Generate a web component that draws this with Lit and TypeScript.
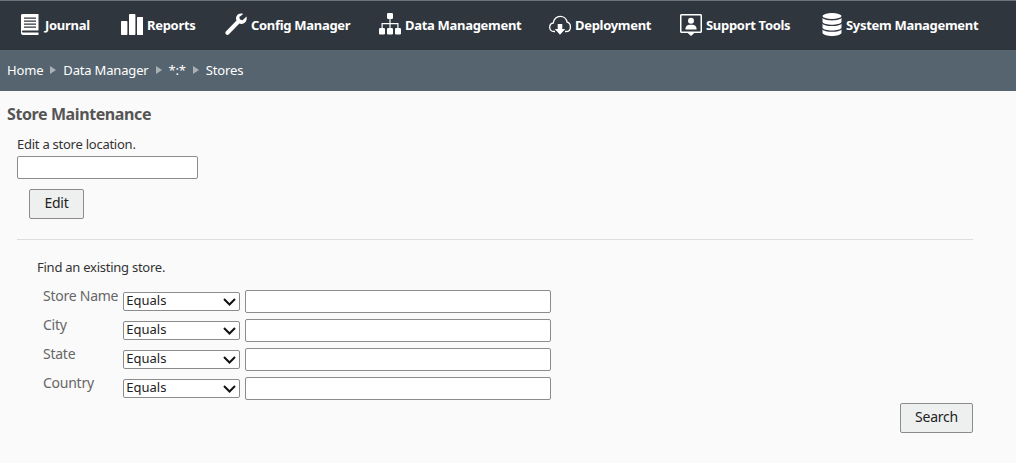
import { LitElement, html, css, svg } from 'lit';
import { customElement } from 'lit/decorators.js';

const icons = {
  journal: svg`<path fill-rule="evenodd" d="M2 2.500C2 1.700 2.700 1 3.500 1H19.500V17.500H4.500C3.200 17.500 2.900 18.200 2.900 18.700S3.400 19.500 4.500 19.500H19.500V22H4C2.900 22 2 21.100 2 20ZM5 4.500V5.700H17V4.500ZM5 7.500V8.700H17V7.500ZM5 10.500V11.700H17V10.500ZM5 13.500V14.700H17V13.500Z"/>`,
  reports: svg`<rect x="0" y="8" width="6.400" height="14" rx=".8"/><rect x="8" y="1" width="6.400" height="21" rx=".8"/><rect x="16" y="4" width="6.400" height="18" rx=".8"/>`,
  config: svg`<path d="M21.500 3.400 17.600 7.200 14.900 6.600 14.300 4 18.200.9C15.400-.1 12.400.7 11.400 3.400 10.800 5 11 6.400 11.500 7.600L1.100 18.300C.1 19.300.2 20.600 1 21.300 1.800 22.100 3 22.100 3.900 21.200L14.400 10.600C15.900 11.200 17.800 11.100 19.200 10.100 21.300 8.600 22.200 6 21.500 3.400Z"/>`,
  data: svg`<rect x="8" y="0" width="6" height="6" rx="1.200"/><path d="M10.400 6H11.600V10H19.500V15H18.300V11.200H11.600V15H10.400V11.200H3.700V15H2.500V10H10.400Z"/><rect x="0" y="15" width="6" height="6.500" rx="1.200"/><rect x="8" y="15" width="6" height="6.500" rx="1.200"/><rect x="16" y="15" width="6" height="6.500" rx="1.200"/>`,
  deployment: svg`<path fill="none" stroke="currentColor" stroke-width="1.300" d="M6 18.500H5C2.400 18.500.7 16.500.7 14.200 .7 11.900 2.400 10.200 4.300 10 4.600 6.200 7.500 3.300 11.200 3.300 14.700 3.300 17.500 5.800 18.100 9.200 20 9.700 21.400 11.600 21.400 13.900 21.400 16.400 19.800 18.500 17 18.500H16"/><path d="M8.700 11H13.300V16H16.200L11 21.700 5.800 16H8.700Z"/>`,
  support: svg`<path fill-rule="evenodd" d="M1.500 1H20.500C21.300 1 22 1.700 22 2.500V18.500C22 19.300 21.300 20 20.500 20H14.300L11 23 7.700 20H1.500C.7 20 0 19.300 0 18.500V2.500C0 1.700.7 1 1.500 1ZM1.500 2.500V18.500H20.500V2.500Z"/><circle cx="11" cy="7.800" r="3"/><path d="M5.500 16.500V15.200C5.500 13.400 7.500 12 9.500 11.800H12.500C14.500 12 16.500 13.400 16.500 15.200V16.500Z"/>`,
  system: svg`<ellipse cx="11" cy="3" rx="9.500" ry="3"/><path d="M1.500 4.800C2.500 6.600 6.500 7.400 11 7.400S19.500 6.600 20.500 4.800V9C19.500 10.800 15.500 11.700 11 11.700S2.500 10.800 1.500 9Z"/><path d="M1.500 10.500C2.500 12.300 6.500 13.100 11 13.100S19.500 12.300 20.500 10.500V14.700C19.500 16.500 15.500 17.400 11 17.400S2.500 16.500 1.500 14.700Z"/><path d="M1.500 16.200C2.500 18 6.500 18.800 11 18.800S19.500 18 20.500 16.200V20C19.500 22 15.500 23 11 23S2.500 22 1.500 20Z"/>`,
};

// tw = width of the label in px, keeps the menu items on the same spacing
const navItems = [
  { label: 'Journal', icon: icons.journal, w: 22, tw: 47 },
  { label: 'Reports', icon: icons.reports, w: 22, tw: 49 },
  { label: 'Config Manager', icon: icons.config, w: 22, tw: 99 },
  { label: 'Data Management', icon: icons.data, w: 22, tw: 115 },
  { label: 'Deployment', icon: icons.deployment, w: 22, tw: 76 },
  { label: 'Support Tools', icon: icons.support, w: 22, tw: 86 },
  { label: 'System Management', icon: icons.system, w: 21, tw: 132 },
];

const crumbs = ['Home', 'Data Manager', '*:*', 'Stores'];
const fields = ['Store Name', 'City', 'State', 'Country'];

@customElement('app-root')
export class AppRoot extends LitElement {
  static styles = css`
    :host {
      display: block;
      height: 463px;
      background: #fafafa;
      color: #333;
      font-family: 'Noto Sans', sans-serif;
      font-size: 13px;
      letter-spacing: -0.25px;
      overflow: hidden;
    }

    .nav {
      display: flex;
      align-items: center;
      gap: 29px;
      height: 49px;
      padding-left: 19px;
      background: #2f363e;
      border-top: 1px solid #6b7278;
    }

    .nav-item {
      display: flex;
      align-items: center;
      gap: 4px;
      color: #fff;
      font-weight: 700;
      font-size: 13px;
      letter-spacing: -0.3px;
      white-space: nowrap;
    }

    .nav-item span {
      margin-top: -2px;
    }

    .nav-item svg {
      display: block;
      height: 24px;
      margin-top: -1px;
      fill: #fff;
      color: #fff;
    }

    .crumbs {
      display: flex;
      align-items: center;
      box-sizing: border-box;
      height: 41px;
      padding: 0 0 2px 7px;
      background: #56646f;
      color: #fff;
      letter-spacing: -0.17px;
    }

    .sep {
      width: 0;
      height: 0;
      margin: 0 7px;
      border-left: 6px solid #a9b1b7;
      border-top: 4px solid transparent;
      border-bottom: 4px solid transparent;
    }

    h1 {
      margin: 12px 0 0 7px;
      font-size: 16px;
      line-height: 22px;
      font-weight: 700;
      letter-spacing: -0.4px;
      color: #555;
    }

    .edit {
      display: flex;
      flex-direction: column;
      align-items: flex-start;
      margin: 10px 43px 0 17px;
      padding-bottom: 20px;
      border-bottom: 1px solid #ddd;
    }

    .edit p,
    .find p {
      margin: 0;
      line-height: 18px;
    }

    input {
      box-sizing: border-box;
      margin: 0;
      padding: 0 4px;
      background: #fff;
      border: 1px solid #8c8c8c;
      border-radius: 2px;
    }

    .edit input {
      width: 181px;
      height: 23px;
      margin-top: 3px;
    }

    button {
      box-sizing: border-box;
      height: 30px;
      margin: 0;
      padding: 0 0 3px;
      background: #eef0f0;
      border: 1px solid #8c8c8c;
      border-radius: 2px;
      color: #222;
      font: inherit;
      font-size: 14px;
      letter-spacing: -0.25px;
    }

    .edit button {
      width: 55px;
      margin: 10px 0 0 12px;
    }

    .find {
      margin: 18px 43px 0 37px;
    }

    .grid {
      display: grid;
      grid-template-columns: max-content 117px 306px;
      align-items: start;
      column-gap: 5px;
      row-gap: 6px;
      margin: 14px 0 0 6px;
    }

    .grid label {
      color: #666;
      font-size: 14px;
      line-height: 18px;
      margin-top: -3px;
    }

    .select {
      position: relative;
      box-sizing: border-box;
      height: 19px;
      margin-top: 2px;
      background: #fff;
      border: 1px solid #8c8c8c;
      border-radius: 2px;
      overflow: hidden;
    }

    .select svg {
      position: absolute;
      top: 5px;
      right: 3px;
      pointer-events: none;
    }

    select {
      appearance: none;
      display: block;
      width: 100%;
      height: 17px;
      margin: -2px 0 0;
      padding: 0 0 0 2px;
      background: transparent;
      border: 0;
      color: #222;
      font: inherit;
      font-size: 13px;
    }

    .grid input {
      width: 306px;
      height: 23px;
    }

    .actions {
      display: flex;
      justify-content: flex-end;
      margin-top: 3px;
    }

    .actions button {
      width: 73px;
    }
  `;

  render() {
    return html`
      <nav class="nav">
        ${navItems.map(
          (n) => html`<div class="nav-item">
            <svg viewBox="0 0 ${n.w} 24" width=${n.w} height="24">${n.icon}</svg>
            <span style="width:${n.tw}px">${n.label}</span>
          </div>`
        )}
      </nav>
      <div class="crumbs">
        ${crumbs.map(
          (c, i) => html`${i > 0 ? html`<span class="sep"></span>` : ''}<span>${c}</span>`
        )}
      </div>
      <h1>Store Maintenance</h1>
      <section class="edit">
        <p>Edit a store location.</p>
        <input type="text" />
        <button>Edit</button>
      </section>
      <section class="find">
        <p>Find an existing store.</p>
        <div class="grid">
          ${fields.map(
            (f) => html`<label>${f}</label>
              <div class="select">
                <select><option>Equals</option></select>
                <svg width="13" height="8" viewBox="0 0 13 8" fill="none" stroke="#111" stroke-width="2">
                  <path d="M1 1 6.500 6.500 12 1" />
                </svg>
              </div>
              <input type="text" />`
          )}
        </div>
        <div class="actions"><button>Search</button></div>
      </section>
    `;
  }
}
